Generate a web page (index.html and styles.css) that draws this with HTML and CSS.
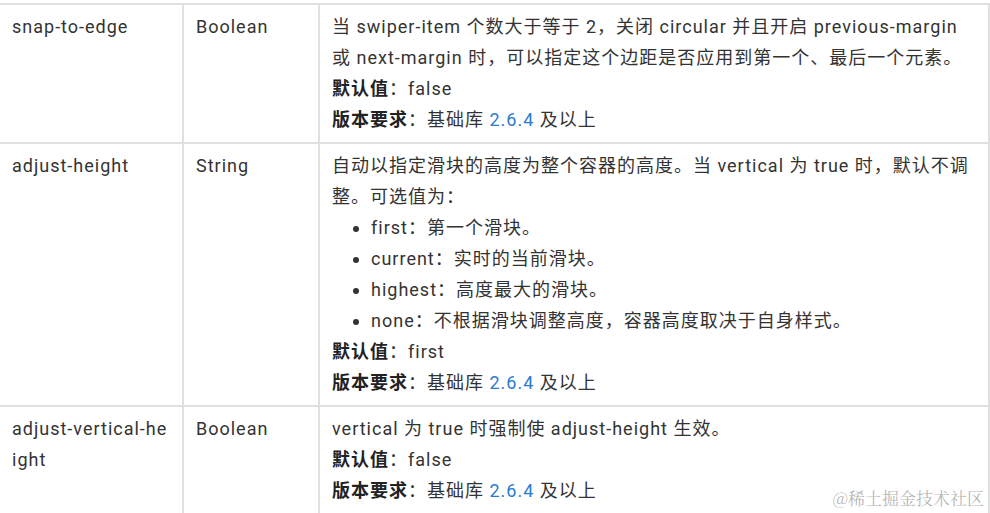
FILE: index.html
```html
<!DOCTYPE html>
<html lang="zh-CN">
<head>
<meta charset="utf-8">
<title>swiper 属性</title>
<link rel="stylesheet" href="styles.css">
</head>
<body>
<div class="page">
  <table class="props">
    <colgroup>
      <col class="c-name">
      <col class="c-type">
      <col class="c-desc">
    </colgroup>
    <tbody>
      <tr>
        <td class="name">snap-to-edge</td>
        <td>Boolean</td>
        <td>
          <p>当 swiper-item 个数大于等于 2，关闭 circular 并且开启 previous-margin 或 next-margin 时，可以指定这个边距是否应用到第一个、最后一个元素。</p>
          <p><strong>默认值</strong>：false</p>
          <p><strong>版本要求</strong>：基础库 <a href="#">2.6.4</a> 及以上</p>
        </td>
      </tr>
      <tr>
        <td class="name">adjust-height</td>
        <td>String</td>
        <td>
          <p>自动以指定滑块的高度为整个容器的高度。当 vertical 为 true 时，默认不调整。可选值为：</p>
          <ul>
            <li>first：第一个滑块。</li>
            <li>current：实时的当前滑块。</li>
            <li>highest：高度最大的滑块。</li>
            <li>none：不根据滑块调整高度，容器高度取决于自身样式。</li>
          </ul>
          <p><strong>默认值</strong>：first</p>
          <p><strong>版本要求</strong>：基础库 <a href="#">2.6.4</a> 及以上</p>
        </td>
      </tr>
      <tr>
        <td class="name">adjust-vertical-height</td>
        <td>Boolean</td>
        <td>
          <p>vertical 为 true 时强制使 adjust-height 生效。</p>
          <p><strong>默认值</strong>：false</p>
          <p><strong>版本要求</strong>：基础库 <a href="#">2.6.4</a> 及以上</p>
        </td>
      </tr>
    </tbody>
  </table>
  <div class="watermark">@稀土掘金技术社区</div>
</div>
</body>
</html>
```

FILE: styles.css
```css
html, body {
  margin: 0;
  padding: 0;
  background: #ffffff;
}

body {
  font-family: Roboto, "Noto Sans CJK SC", sans-serif;
  font-size: 18px;
  line-height: 31px;
  color: #333333;
  letter-spacing: 1px;
  overflow: hidden;
}

.page {
  position: relative;
  width: 990px;
  height: 513px;
  overflow: hidden;
  padding-top: 3px;
  box-sizing: border-box;
}

.props {
  border-collapse: collapse;
  table-layout: fixed;
  width: 992px;
  margin-left: -2px;
}

.c-name { width: 184px; }
.c-type { width: 136px; }

.props td {
  border: 2px solid #e0e0e0;
  padding: 6px 12px 7px 12px;
  vertical-align: top;
}

.props td.name {
  word-break: break-all;
}

.props p {
  margin: 0;
}

.props strong {
  color: #222222;
  font-weight: 700;
}

.props a {
  color: #2b7bd2;
  text-decoration: none;
}

.props ul {
  margin: 0;
  padding-left: 39px;
}

.props li {
  margin: 0;
}

.watermark {
  position: absolute;
  right: 6px;
  bottom: 5px;
  font-family: "Noto Serif CJK SC", "Noto Sans CJK SC", serif;
  font-size: 17px;
  line-height: 20px;
  letter-spacing: 0;
  color: rgba(150, 150, 150, 0.7);
}
```
